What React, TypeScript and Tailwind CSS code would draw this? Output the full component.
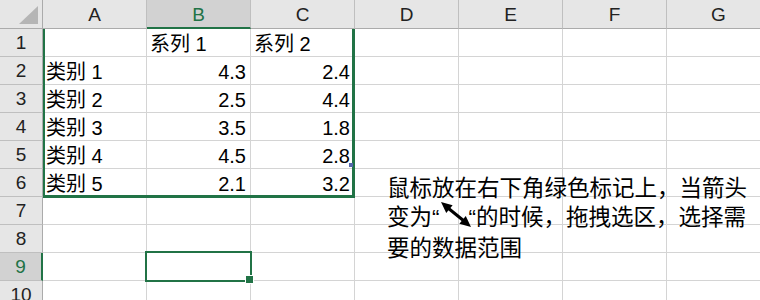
const COLS = ["A", "B", "C", "D", "E", "F", "G"];

const DATA: string[][] = [
  ["", "系列 1", "系列 2"],
  ["类别 1", "4.3", "2.4"],
  ["类别 2", "2.5", "4.4"],
  ["类别 3", "3.5", "1.8"],
  ["类别 4", "4.5", "2.8"],
  ["类别 5", "2.1", "3.2"],
];

const ROWS = 10;
const ACTIVE_COL = 1; // B
const ACTIVE_ROW = 9;

// diagonal resize cursor (↖↘)
function ResizeArrow() {
  return (
    <svg width="32" height="27" viewBox="0 0 32 27" className="inline-block align-top mr-[-3px]">
      <line x1="8" y1="7" x2="24" y2="20" stroke="#000" strokeWidth="3" />
      <polygon points="1,1 6.25,11.88 12.65,4.2" fill="#000" />
      <polygon points="31,26 19.35,22.8 25.75,15.12" fill="#000" />
    </svg>
  );
}

export default function App() {
  return (
    <div
      className="relative w-[760px] h-[300px] overflow-hidden bg-white text-black"
      style={{ fontFamily: '"Liberation Sans", "Noto Sans CJK SC", sans-serif' }}
    >
      <div className="grid grid-cols-[43px_repeat(7,104px)] grid-rows-[29px_repeat(10,28px)]">
        {/* corner */}
        <div className="relative bg-[#e6e6e6] border-r border-b border-[#ababab]">
          <svg width="20" height="19" viewBox="0 0 20 19" className="absolute right-[3px] bottom-[3px]">
            <polygon points="19,0 19,18 0,18" fill="#b5b5b5" />
          </svg>
        </div>
        {COLS.map((c, i) => (
          <div
            key={c}
            className={
              i === ACTIVE_COL
                ? "flex items-end justify-center bg-[#d2d2d2] border-r border-r-[#bfbfbf] border-b-2 border-b-[#217346] text-[19px] leading-[20px] text-[#217346] pb-[2px]"
                : "flex items-end justify-center bg-[#e6e6e6] border-r border-r-[#bfbfbf] border-b border-b-[#ababab] text-[19px] leading-[20px] text-[#222] pb-[3px]"
            }
          >
            {c}
          </div>
        ))}

        {Array.from({ length: ROWS }, (_, r) => {
          const rowNo = r + 1;
          const row = DATA[r] ?? [];
          return [
            <div
              key={`h${rowNo}`}
              className={
                rowNo === ACTIVE_ROW
                  ? "flex items-end justify-center bg-[#d2d2d2] border-r-2 border-r-[#217346] border-b border-b-[#bfbfbf] text-[19px] leading-[20px] text-[#217346] pb-[3px]"
                  : "flex items-end justify-center bg-[#e6e6e6] border-r border-r-[#ababab] border-b border-b-[#bfbfbf] text-[19px] leading-[20px] text-[#222] pb-[3px]"
              }
            >
              {rowNo}
            </div>,
            ...COLS.map((c, ci) => {
              const v = row[ci] ?? "";
              const numeric = /^[0-9.]+$/.test(v);
              return (
                <div
                  key={`${c}${rowNo}`}
                  className={
                    numeric
                      ? "flex items-end justify-end border-r border-b border-[#d4d4d4] pr-[4px] pb-[2px] text-[20px] leading-[20px] whitespace-nowrap"
                      : "flex items-end justify-start border-r border-b border-[#d4d4d4] pl-[3px] pb-[2px] text-[20px] leading-[20px] whitespace-nowrap"
                  }
                >
                  {v}
                </div>
              );
            }),
          ];
        })}
      </div>

      {/* data range A1:C6 */}
      <div className="absolute left-[43px] top-[29px] w-[312px] h-[169px] border-l-2 border-r-[3px] border-b-[3px] border-[#217346]" />
      <div className="absolute left-[349px] top-[163px] w-[4px] h-[4px] bg-[#5566aa]" />

      {/* active cell B9 */}
      <div className="absolute left-[145px] top-[251px] w-[107px] h-[31px] border-2 border-[#217346]" />
      <div className="absolute left-[245px] top-[275px] w-[9px] h-[9px] bg-[#217346] border border-white" />

      {/* note */}
      <div
        className="absolute left-[387px] top-[172px] text-[22.5px] leading-[29px] whitespace-nowrap text-black"
        style={{ fontFamily: '"Noto Sans CJK SC", sans-serif' }}
      >
        <div>鼠标放在右下角绿色标记上，当箭头</div>
        <div>
          变为<span className="font-['Liberation_Sans']">“</span>
          <ResizeArrow />
          <span className="font-['Liberation_Sans']">“</span>的时候，拖拽选区，选择需
        </div>
        <div>要的数据范围</div>
      </div>
    </div>
  );
}
